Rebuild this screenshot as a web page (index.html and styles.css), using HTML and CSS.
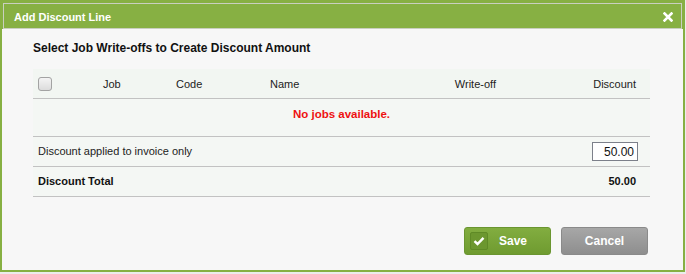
FILE: index.html
```html
<!DOCTYPE html>
<html lang="en">
<head>
    <meta charset="UTF-8">
    <meta name="viewport" content="width=device-width, initial-scale=1.0">
    <title>Add Discount Line</title>
    <link rel="stylesheet" href="styles.css">
</head>
<body>
    <div class="dialog">
        <div class="dialog-top">
            <div class="dialog-header">
                <span class="dialog-title">Add Discount Line</span>
                <span class="close">
                    <svg width="10" height="10" viewBox="0 0 10 10">
                        <path d="M1.5 1.5 L8.5 8.5 M8.5 1.5 L1.5 8.5" stroke="#fff" stroke-width="2.6" stroke-linecap="square"/>
                    </svg>
                </span>
            </div>
        </div>
        <div class="dialog-body">
            <h2 class="section-title">Select Job Write-offs to Create Discount Amount</h2>
            <table class="jobs">
                <colgroup>
                    <col style="width:65px">
                    <col style="width:73px">
                    <col style="width:94px">
                    <col style="width:135px">
                    <col style="width:100px">
                    <col style="width:150px">
                </colgroup>
                <thead>
                    <tr>
                        <th class="check-cell"><span class="checkbox"></span></th>
                        <th>Job</th>
                        <th>Code</th>
                        <th>Name</th>
                        <th class="writeoff">Write-off</th>
                        <th class="amount">Discount</th>
                    </tr>
                </thead>
                <tbody>
                    <tr class="empty-row">
                        <td colspan="6" class="empty">No jobs available.</td>
                    </tr>
                    <tr>
                        <td colspan="5" class="label">Discount applied to invoice only</td>
                        <td class="amount"><input class="amount-input" type="text" value="50.00"></td>
                    </tr>
                    <tr class="total">
                        <td colspan="5" class="label">Discount Total</td>
                        <td class="amount">50.00</td>
                    </tr>
                </tbody>
            </table>
            <div class="actions">
                <button class="btn btn-save">
                    <span class="btn-icon">
                        <svg width="12" height="10" viewBox="0 0 12 10">
                            <path d="M1.5 5.2 L4.5 8 L10.5 1.8" fill="none" stroke="#fff" stroke-width="2.4"/>
                        </svg>
                    </span>
                    Save
                </button>
                <button class="btn btn-cancel">Cancel</button>
            </div>
        </div>
    </div>
</body>
</html>
```

FILE: styles.css
```css
body {
    margin: 0;
    background-color: #ececec;
    font-family: "Liberation Sans", Arial, sans-serif;
    color: #222;
}
.dialog {
    width: 681px;
    border: 2px solid #87b043;
    background: #f7f7f7;
}
.dialog-top {
    background: #87b043;
    padding: 1px 1px 0;
}
.dialog-header {
    height: 24px;
    border: 1px solid #c9cfc0;
    display: flex;
    align-items: center;
    justify-content: space-between;
    padding: 0 8px 0 10px;
}
.dialog-title {
    color: #fff;
    font-size: 11px;
    font-weight: bold;
    padding-top: 1px;
}
.close {
    display: flex;
    padding-top: 2px;
}
.dialog-body {
    padding: 12px 35px 15px 31px;
}
.section-title {
    margin: 0 0 14px;
    font-size: 12px;
    font-weight: bold;
    line-height: 14px;
    color: #111;
}
.jobs {
    width: 617px;
    table-layout: fixed;
    border-collapse: collapse;
    background: #f4f7f4;
    font-size: 11px;
}
.jobs th {
    height: 29px;
    padding: 0 0 0 5px;
    text-align: left;
    font-weight: normal;
    color: #222;
    border-bottom: 1px solid #c2c2c2;
    background: #f2f6f2;
}
.jobs td {
    height: 29px;
    padding: 0 0 0 5px;
    line-height: 13px;
    border-bottom: 1px solid #c2c2c2;
}
.checkbox {
    display: block;
    width: 12px;
    height: 12px;
    border: 1px solid #a3a3a3;
    border-radius: 3px;
    background: linear-gradient(#f4f4f4, #dcdcdc);
}
.jobs .writeoff {
    text-align: right;
    padding-right: 4px;
}
.jobs .amount {
    text-align: right;
    padding-right: 14px;
}
.jobs .empty {
    height: 31px;
    text-align: center;
    color: #ee1111;
    font-size: 11.5px;
    font-weight: bold;
    padding: 0 0 6px;
}
.total td {
    font-weight: bold;
    color: #111;
}
.amount-input {
    box-sizing: border-box;
    width: 46px;
    height: 19px;
    margin-right: -2px;
    padding: 0 3px;
    border: 1px solid #7c808a;
    background: #fff;
    font-family: "Liberation Sans", Arial, sans-serif;
    font-size: 12px;
    text-align: right;
    color: #111;
    vertical-align: middle;
}
.actions {
    display: flex;
    justify-content: flex-end;
    gap: 10px;
    margin-top: 30px;
}
.btn {
    width: 87px;
    height: 28px;
    border-radius: 3px;
    font-family: "Liberation Sans", Arial, sans-serif;
    font-size: 12px;
    font-weight: bold;
    color: #fff;
    cursor: pointer;
    display: flex;
    align-items: center;
    justify-content: center;
    padding: 0;
}
.btn-save {
    background: linear-gradient(#82ad40, #6f9b30);
    border: 1px solid #6a9530;
    justify-content: flex-start;
    padding-left: 5px;
    gap: 11px;
}
.btn-icon {
    width: 16px;
    height: 16px;
    border: 1px solid #5f8a26;
    border-radius: 2px;
    background: #6c972f;
    display: flex;
    align-items: center;
    justify-content: center;
}
.btn-cancel {
    background: linear-gradient(#a7a7a7, #8e8e8e);
    border: 1px solid #8a8a8a;
}
```
